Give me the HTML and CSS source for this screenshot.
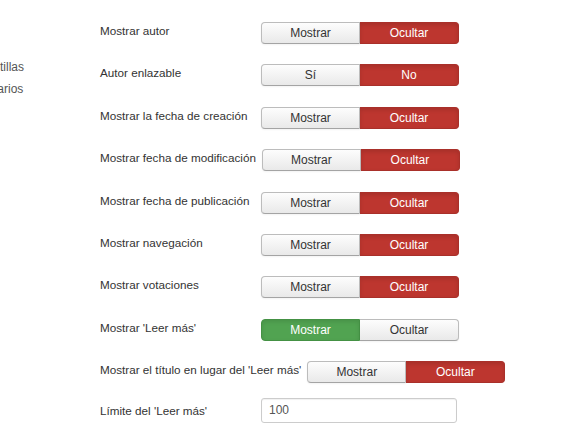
FILE: index.html
```html
<!DOCTYPE html>
<html lang="es">
<head>
  <meta charset="UTF-8">
  <title>Opciones de artículos</title>
  <link rel="stylesheet" href="styles.css">
</head>
<body>
  <div class="page">
    <ul class="sidebar">
      <li>Plantillas</li>
      <li>Usuarios</li>
    </ul>

    <form class="options">
      <div class="control-group">
        <label class="control-label">Mostrar autor</label>
        <div class="btn-group">
          <button type="button" class="btn">Mostrar</button>
          <button type="button" class="btn active-no">Ocultar</button>
        </div>
      </div>
      <div class="control-group">
        <label class="control-label">Autor enlazable</label>
        <div class="btn-group">
          <button type="button" class="btn">Sí</button>
          <button type="button" class="btn active-no">No</button>
        </div>
      </div>
      <div class="control-group">
        <label class="control-label">Mostrar la fecha de creación</label>
        <div class="btn-group">
          <button type="button" class="btn">Mostrar</button>
          <button type="button" class="btn active-no">Ocultar</button>
        </div>
      </div>
      <div class="control-group">
        <label class="control-label">Mostrar fecha de modificación</label>
        <div class="btn-group">
          <button type="button" class="btn">Mostrar</button>
          <button type="button" class="btn active-no">Ocultar</button>
        </div>
      </div>
      <div class="control-group">
        <label class="control-label">Mostrar fecha de publicación</label>
        <div class="btn-group">
          <button type="button" class="btn">Mostrar</button>
          <button type="button" class="btn active-no">Ocultar</button>
        </div>
      </div>
      <div class="control-group">
        <label class="control-label">Mostrar navegación</label>
        <div class="btn-group">
          <button type="button" class="btn">Mostrar</button>
          <button type="button" class="btn active-no">Ocultar</button>
        </div>
      </div>
      <div class="control-group">
        <label class="control-label">Mostrar votaciones</label>
        <div class="btn-group">
          <button type="button" class="btn">Mostrar</button>
          <button type="button" class="btn active-no">Ocultar</button>
        </div>
      </div>
      <div class="control-group">
        <label class="control-label">Mostrar 'Leer más'</label>
        <div class="btn-group">
          <button type="button" class="btn active-yes">Mostrar</button>
          <button type="button" class="btn">Ocultar</button>
        </div>
      </div>
      <div class="control-group before-input">
        <label class="control-label">Mostrar el título en lugar del 'Leer más'</label>
        <div class="btn-group">
          <button type="button" class="btn">Mostrar</button>
          <button type="button" class="btn active-no">Ocultar</button>
        </div>
      </div>
      <div class="control-group">
        <label class="control-label input-label">Límite del 'Leer más'</label>
        <input type="text" class="text-input" value="100">
      </div>
    </form>
  </div>
</body>
</html>
```

FILE: styles.css
```css
body {
  margin: 0;
  font-family: "Liberation Sans", Arial, sans-serif;
  background-color: #fff;
  color: #333;
}

.page {
  display: flex;
  align-items: flex-start;
  overflow: hidden;
}

.sidebar {
  list-style: none;
  margin: 0 0 0 -24px;
  padding: 56px 0 0 0;
  width: 124px;
  flex-shrink: 0;
  font-size: 12px;
  line-height: 22px;
  color: #555;
}

.options {
  padding-top: 22px;
}

.control-group {
  display: flex;
  align-items: flex-start;
  margin-bottom: 20.4px;
}

.control-group.before-input {
  margin-bottom: 14.8px;
}

.control-label {
  min-width: 155px;
  margin-right: 6px;
  font-size: 11.7px;
  line-height: 18px;
  white-space: nowrap;
}

.control-label.input-label {
  padding-top: 4px;
}

.btn-group {
  display: flex;
}

.btn {
  width: 99px;
  height: 22px;
  padding: 0;
  font-family: inherit;
  font-size: 12px;
  color: #333;
  background-color: #f3f3f3;
  background-image: linear-gradient(#fdfdfd, #e9e9e9);
  border: 1px solid #bcbcbc;
  border-bottom-color: #a4a4a4;
  box-shadow: 0 1px 2px rgba(0,0,0,0.05);
  cursor: pointer;
}

.btn:first-child {
  border-radius: 4px 0 0 4px;
}

.btn:last-child {
  border-radius: 0 4px 4px 0;
  border-left: none;
}

.btn.active-no {
  color: #fff;
  background-color: #bd362f;
  background-image: none;
  border-color: #a9302a;
  box-shadow: inset 0 2px 4px rgba(0,0,0,0.12);
}

.btn.active-yes {
  color: #fff;
  background-color: #51a351;
  background-image: none;
  border-color: #449144;
  box-shadow: inset 0 2px 4px rgba(0,0,0,0.1);
}

.text-input {
  box-sizing: border-box;
  width: 196px;
  height: 25px;
  margin: 0;
  padding: 0 7px;
  font-family: inherit;
  font-size: 12px;
  color: #555;
  border: 1px solid #ccc;
  border-radius: 3px;
  box-shadow: inset 0 1px 1px rgba(0,0,0,0.06);
}
```
